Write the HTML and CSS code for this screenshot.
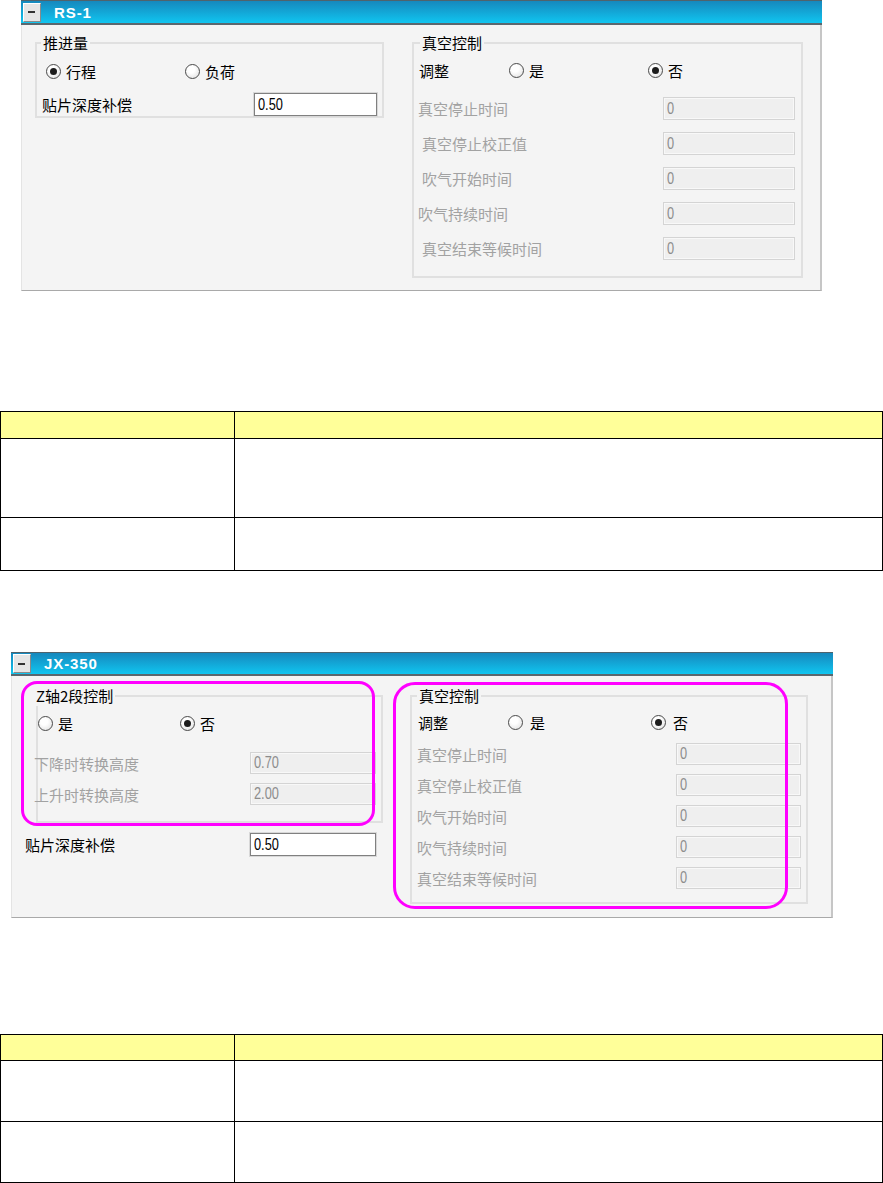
FILE: index.html
```html
<!DOCTYPE html>
<html lang="zh-CN">
<head>
<meta charset="utf-8">
<title>RS-1 / JX-350</title>
<link rel="stylesheet" href="styles.css">
</head>
<body>
<div class="panel p1">
  <div class="titlebar"><span class="minbtn"><span class="bar"></span></span><span class="ptitle">RS-1</span></div>
  <div class="pbody">
    <div class="group g1">
      <span class="gtitle">推进量</span>
      <div class="radios r1">
        <span class="ropt w139"><span class="radio on"></span>行程</span>
        <span class="ropt"><span class="radio"></span>负荷</span>
      </div>
      <div class="field f1">
        <span class="flabel">贴片深度补偿</span>
        <span class="input"><span class="val">0.50</span></span>
      </div>
    </div>
    <div class="group g2">
      <span class="gtitle">真空控制</span>
      <div class="radios r2">
        <span class="rlabel">调整</span>
        <span class="ropt w139"><span class="radio"></span>是</span>
        <span class="ropt"><span class="radio on"></span>否</span>
      </div>
      <div class="rows">
        <div class="field dis"><span class="flabel">真空停止时间</span><span class="input off"><span class="val">0</span></span></div>
        <div class="field dis"><span class="flabel i2">真空停止校正值</span><span class="input off"><span class="val">0</span></span></div>
        <div class="field dis"><span class="flabel i2">吹气开始时间</span><span class="input off"><span class="val">0</span></span></div>
        <div class="field dis"><span class="flabel">吹气持续时间</span><span class="input off"><span class="val">0</span></span></div>
        <div class="field dis"><span class="flabel i2">真空结束等候时间</span><span class="input off"><span class="val">0</span></span></div>
      </div>
    </div>
  </div>
</div>

<table class="spec t1">
  <colgroup><col class="c1"><col></colgroup>
  <tr class="head"><td></td><td></td></tr>
  <tr class="ra"><td></td><td></td></tr>
  <tr class="rb"><td></td><td></td></tr>
</table>

<div class="panel p2">
  <div class="titlebar"><span class="minbtn"><span class="bar"></span></span><span class="ptitle">JX-350</span></div>
  <div class="pbody">
    <div class="col">
      <div class="group g3">
        <span class="gtitle">Z轴2段控制</span>
        <div class="radios r3">
          <span class="ropt w142"><span class="radio"></span>是</span>
          <span class="ropt"><span class="radio on"></span>否</span>
        </div>
        <div class="rows rows3">
          <div class="field dis"><span class="flabel">下降时转换高度</span><span class="input off"><span class="val">0.70</span></span></div>
          <div class="field dis"><span class="flabel">上升时转换高度</span><span class="input off"><span class="val">2.00</span></span></div>
        </div>
      </div>
      <div class="field f3">
        <span class="flabel">贴片深度补偿</span>
        <span class="input"><span class="val">0.50</span></span>
      </div>
    </div>
    <div class="group g4">
      <span class="gtitle">真空控制</span>
      <div class="radios r4">
        <span class="rlabel">调整</span>
        <span class="ropt w143"><span class="radio"></span>是</span>
        <span class="ropt"><span class="radio on"></span>否</span>
      </div>
      <div class="rows rows4">
        <div class="field dis"><span class="flabel">真空停止时间</span><span class="input off"><span class="val">0</span></span></div>
        <div class="field dis"><span class="flabel">真空停止校正值</span><span class="input off"><span class="val">0</span></span></div>
        <div class="field dis"><span class="flabel">吹气开始时间</span><span class="input off"><span class="val">0</span></span></div>
        <div class="field dis"><span class="flabel">吹气持续时间</span><span class="input off"><span class="val">0</span></span></div>
        <div class="field dis"><span class="flabel">真空结束等候时间</span><span class="input off"><span class="val">0</span></span></div>
      </div>
    </div>
  </div>
  <div class="mark mark-left"></div>
  <div class="mark mark-right"></div>
</div>

<table class="spec t2">
  <colgroup><col class="c1"><col></colgroup>
  <tr class="head"><td></td><td></td></tr>
  <tr class="rc"><td></td><td></td></tr>
  <tr class="rc"><td></td><td></td></tr>
</table>
</body>
</html>
```

FILE: styles.css
```css
html, body {
  margin: 0;
  padding: 0;
  background: #ffffff;
}
body {
  font-family: "Noto Sans CJK SC", "Noto Sans", sans-serif;
  font-size: 15px;
  color: #000;
}

/* ---------- panels ---------- */
.panel {
  box-sizing: border-box;
  position: relative;
}
.p1 {
  margin-left: 21px;
  width: 801px;
}
.p2 {
  margin-top: 81px;
  margin-left: 11px;
  width: 822px;
}
.titlebar {
  box-sizing: border-box;
  height: 25px;
  display: flex;
  align-items: center;
  border-top: 1px solid #4f636c;
  border-bottom: 2px solid #5a676e;
  background: linear-gradient(#1688bd, #10c5f0);
}
.p2 .titlebar {
  height: 24px;
}
.minbtn {
  box-sizing: border-box;
  width: 18px;
  height: 19px;
  margin-left: 2px;
  background: #e6e6e6;
  border: 1px solid;
  border-color: #ffffff #8a8a8a #8a8a8a #ffffff;
  display: flex;
  align-items: center;
  padding-left: 4px;
}
.minbtn .bar {
  width: 7px;
  height: 2px;
  background: #333;
}
.ptitle {
  margin-left: 13px;
  font-family: "Liberation Sans", Arial, sans-serif;
  font-weight: bold;
  font-size: 15px;
  letter-spacing: 0.9px;
  color: #ffffff;
}
.pbody {
  box-sizing: border-box;
  display: flex;
  align-items: flex-start;
  background: #f4f4f4;
  border-left: 1px solid #e4e4e4;
  border-right: 2px solid #c6c6c6;
  border-bottom: 1px solid #a9a9a9;
}
.p1 .pbody {
  height: 266px;
  padding: 17px 0 0 13px;
}
.p2 .pbody {
  height: 242px;
  padding: 19px 0 0 13px;
}

/* ---------- group boxes ---------- */
.group {
  box-sizing: border-box;
  border: 2px solid #e0e0e0;
  flex: none;
}
.gtitle {
  display: block;
  width: fit-content;
  margin: -11px 0 0 4px;
  padding: 0 2px;
  line-height: 20px;
  background: #f4f4f4;
}
.g1 { width: 349px; height: 76px; }
.g2 { width: 391px; height: 236px; margin-left: 28px; }
.g2 .gtitle { margin-left: 6px; }
.g3 { width: 347px; height: 128px; margin-left: 11px; }
.g3 .gtitle { margin-left: -4px; }
.g4 { width: 398px; height: 209px; margin-left: 27px; }
.g4 .gtitle { margin-left: 5px; }

/* ---------- radios ---------- */
.radios {
  display: flex;
  align-items: center;
  height: 22px;
}
.r1 { margin-top: 7px; padding-left: 9px; }
.r2 { margin-top: 6px; }
.r3 { margin-top: 6px; }
.r4 { margin-top: 5px; }
.rlabel { box-sizing: border-box; }
.r2 .rlabel { width: 95px; padding-left: 5px; }
.r4 .rlabel { width: 96px; padding-left: 6px; }
.ropt {
  display: flex;
  align-items: center;
  gap: 5px;
}
.r4 .ropt { gap: 7px; }
.w139 { width: 139px; }
.w142 { width: 142px; }
.w143 { width: 143px; }
.radio {
  box-sizing: border-box;
  width: 15px;
  height: 15px;
  border: 1px solid #4a4a4a;
  border-radius: 50%;
  background: radial-gradient(circle at 40% 35%, #ffffff 30%, #dcdcdc 100%);
  display: flex;
  align-items: center;
  justify-content: center;
}
.radio.on::after {
  content: "";
  width: 7px;
  height: 7px;
  border-radius: 50%;
  background: #1c1c1c;
}

/* ---------- fields ---------- */
.field {
  display: flex;
  align-items: center;
  height: 23px;
}
.flabel {
  box-sizing: border-box;
  white-space: nowrap;
}
.input {
  box-sizing: border-box;
  height: 23px;
  padding-left: 3px;
  display: flex;
  align-items: center;
  overflow: hidden;
  font-family: "Liberation Sans", Arial, sans-serif;
  font-size: 16px;
  color: #000;
  background: #ffffff;
  border: 1px solid #808080;
  box-shadow: 0 0 0 1px #d8d8d8;
}
.val {
  display: inline-block;
  transform: scaleX(0.8);
  transform-origin: left center;
  line-height: 18px;
}
.input.off {
  color: #8c8c8c;
  background: #efefef;
  border: 1px solid #d4d4d4;
  box-shadow: inset 0 0 0 1px #f8f8f8;
}
.dis .flabel { color: #a2a2a2; }

.f1 { margin-top: 11px; }
.f1 .flabel { width: 217px; padding-left: 5px; }
.f1 .input { width: 123px; }

.rows {
  display: flex;
  flex-direction: column;
}
.g2 .rows { margin-top: 16px; gap: 12px; }
.g2 .flabel { width: 249px; padding-left: 4px; }
.g2 .flabel.i2 { padding-left: 8px; }
.g2 .input { width: 132px; }

.rows3 { margin-top: 18px; gap: 9px; margin-left: -4px; }
.rows3 .field { height: 22px; }
.rows3 .flabel { width: 216px; }
.rows3 .input { width: 126px; height: 22px; }

.col {
  display: flex;
  flex-direction: column;
  flex: none;
}
.f3 { margin-top: 10px; }
.f3 .flabel { width: 225px; }
.f3 .input { width: 126px; }

.rows4 { margin-top: 10px; gap: 9px; }
.rows4 .field { height: 22px; }
.rows4 .flabel { width: 264px; padding-left: 5px; }
.rows4 .input { width: 125px; height: 22px; }

/* ---------- annotation marks ---------- */
.mark {
  position: absolute;
  box-sizing: border-box;
  border: 3px solid #ff00ff;
}
.mark-left {
  left: 10px;
  top: 29px;
  width: 354px;
  height: 145px;
  border-radius: 16px;
}
.mark-right {
  left: 382px;
  top: 30px;
  width: 395px;
  height: 227px;
  border-radius: 22px;
}

/* ---------- tables ---------- */
.spec {
  border-collapse: collapse;
  table-layout: fixed;
  width: 883px;
}
.spec td {
  border: 1px solid #000;
  padding: 0;
}
.spec .c1 { width: 234px; }
.spec .head td { background: #ffff99; }
.t1 { margin-top: 120px; }
.t1 .head { height: 27px; }
.t1 .ra { height: 79px; }
.t1 .rb { height: 53px; }
.t2 { margin-top: 116px; }
.t2 .head { height: 26px; }
.t2 .rc { height: 61px; }
```
